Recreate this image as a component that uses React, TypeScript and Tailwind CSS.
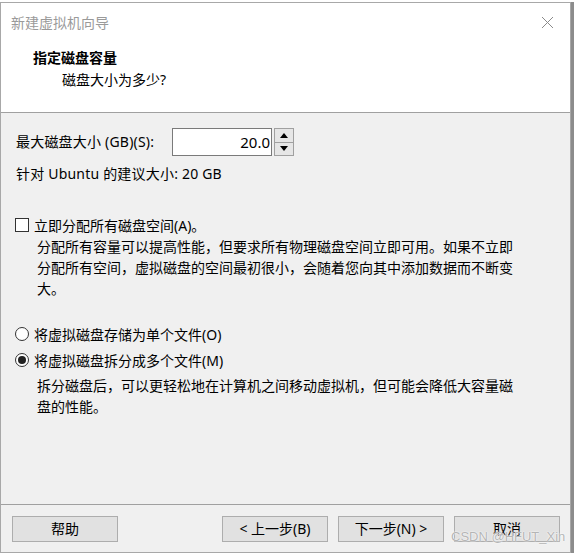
import React from "react";

const font = "font-['Noto_Sans','Noto_Sans_CJK_SC',sans-serif]";

function Btn({ children, className = "" }: { children: React.ReactNode; className?: string }) {
  return (
    <div
      className={`h-[26px] w-[106px] border border-[#adadad] bg-[#e1e1e1] flex items-center justify-center text-[14px] leading-none text-black ${className}`}
    >
      {children}
    </div>
  );
}

export default function App() {
  return (
    <div className={`relative w-[574px] h-[554px] bg-white flex ${font} text-[14px] text-black`}>
      <div className="mt-[2px] w-[571px] h-[551px] border border-[#a8a8a8] bg-[#f0f0f0] flex flex-col">
        {/* header */}
        <div className="h-[110px] bg-white border-b border-[#a0a0a0] flex flex-col">
          <div className="h-[38px] flex items-center justify-between pl-[10px] pr-[16px]">
            <span className="text-[#9a9a9a] text-[14px]">新建虚拟机向导</span>
            <svg width="13" height="13" viewBox="0 0 13 13">
              <path d="M1 1 L12 12 M12 1 L1 12" stroke="#8a8a8a" strokeWidth="1" />
            </svg>
          </div>
          <div className="mt-[6px] pl-[32px] leading-[22px] font-bold">指定磁盘容量</div>
          <div className="pl-[61px] leading-[22px]">磁盘大小为多少?</div>
        </div>

        {/* body */}
        <div className="flex-1 flex flex-col pl-[14px]">
          <div className="mt-[15px] h-[28px] flex items-center">
            <span className="ml-[1px] w-[156px] leading-[20px] tracking-[0.2px]">最大磁盘大小 (GB)(S):</span>
            <div className="flex items-stretch h-[28px]">
              <div className="w-[100px] border border-[#7a7a7a] bg-white flex items-center justify-end pr-[1px] text-[15px]">
                20.0
              </div>
              <div className="ml-[2px] w-[20px] flex flex-col border border-[#a0a0a0]">
                <div className="flex-1 bg-[#e6e6e6] border-b border-[#a0a0a0] flex items-center justify-center">
                  <svg width="8" height="5" viewBox="0 0 8 5">
                    <path d="M0 5 L4 0 L8 5 Z" fill="#000" />
                  </svg>
                </div>
                <div className="flex-1 bg-[#e6e6e6] flex items-center justify-center">
                  <svg width="8" height="5" viewBox="0 0 8 5">
                    <path d="M0 0 L8 0 L4 5 Z" fill="#000" />
                  </svg>
                </div>
              </div>
            </div>
          </div>
          <div className="mt-[8px] ml-[1px] leading-[20px] tracking-[0.2px]">针对 Ubuntu 的建议大小: 20 GB</div>

          <div className="mt-[31px] h-[20px] flex items-center">
            <div className="w-[14px] h-[14px] border border-[#333] bg-white" />
            <span className="ml-[5px]">立即分配所有磁盘空间(A)。</span>
          </div>
          <div className="ml-[22px] mt-[1px] leading-[21px]">
            分配所有容量可以提高性能，但要求所有物理磁盘空间立即可用。如果不立即
            <br />
            分配所有空间，虚拟磁盘的空间最初很小，会随着您向其中添加数据而不断变
            <br />
            大。
          </div>

          <div className="mt-[25px] h-[20px] flex items-center">
            <div className="w-[14px] h-[14px] rounded-full border border-[#333] bg-white" />
            <span className="ml-[5px]">将虚拟磁盘存储为单个文件(O)</span>
          </div>
          <div className="mt-[6px] h-[20px] flex items-center">
            <div className="w-[14px] h-[14px] rounded-full border border-[#333] bg-white flex items-center justify-center">
              <div className="w-[8px] h-[8px] rounded-full bg-[#222]" />
            </div>
            <span className="ml-[5px]">将虚拟磁盘拆分成多个文件(M)</span>
          </div>
          <div className="ml-[22px] mt-[5px] leading-[21px]">
            拆分磁盘后，可以更轻松地在计算机之间移动虚拟机，但可能会降低大容量磁
            <br />
            盘的性能。
          </div>
        </div>

        {/* footer */}
        <div className="h-[48px] border-t border-[#a0a0a0] flex pt-[11px] pl-[11px]">
          <Btn>帮助</Btn>
          <Btn className="ml-[104px]">&lt; 上一步(B)</Btn>
          <Btn className="ml-[10px]">下一步(N) &gt;</Btn>
          <Btn className="ml-[10px]">取消</Btn>
        </div>
      </div>
      <div className="w-[3px] mt-[2px] h-[551px] bg-[#8c8c8c]" />

      <div className="absolute left-[451px] top-[528px] text-[13px] leading-[18px] text-[#b5b5b5] font-['Liberation_Sans',sans-serif] [text-shadow:0_0_2px_#fff,0_0_1px_#fff]">
        CSDN @HFUT_Xin
      </div>
    </div>
  );
}
